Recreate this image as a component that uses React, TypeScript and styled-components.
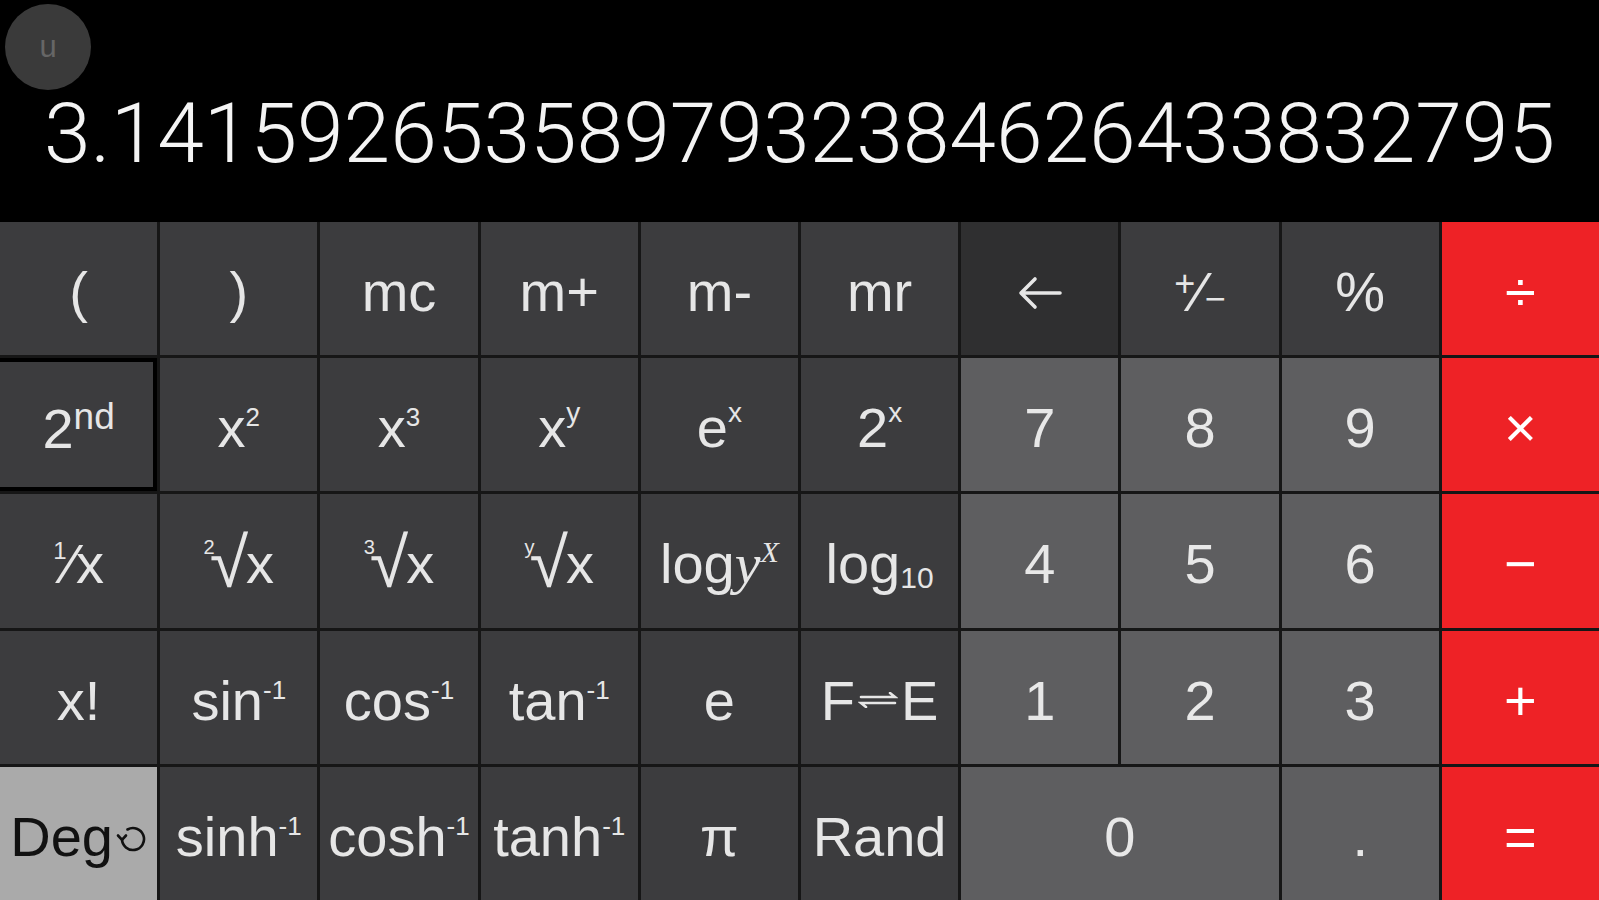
import React, { ReactNode } from 'react';
import styled, { createGlobalStyle, css } from 'styled-components';

type Tone = 'fn' | 'back' | 'num' | 'op' | 'mode';

const palette: Record<Tone, { bg: string; fg: string }> = {
    fn: { bg: '#3c3c3e', fg: '#e6e6e6' },
    back: { bg: '#2f2f30', fg: '#e6e6e6' },
    num: { bg: '#5e5e60', fg: '#e8e8e8' },
    op: { bg: '#ee2226', fg: '#ffffff' },
    mode: { bg: '#aaaaaa', fg: '#111111' },
};

const GlobalStyle = createGlobalStyle`
    html, body {
        margin: 0;
        padding: 0;
        background: #000;
    }
    body {
        font-family: 'Liberation Sans', Arial, sans-serif;
        overflow: hidden;
    }
`;

const Screen = styled.div`
    width: 1599px;
    height: 900px;
    display: flex;
    flex-direction: column;
    background: #000;
`;

const Display = styled.div`
    position: relative;
    height: 222px;
    box-sizing: border-box;
    padding-top: 92px;
    display: flex;
    justify-content: center;
`;

const Avatar = styled.div`
    position: absolute;
    top: 4px;
    left: 5px;
    width: 86px;
    height: 86px;
    border-radius: 50%;
    background: #3a3a3a;
    color: #666666;
    font-size: 31px;
    display: flex;
    align-items: center;
    justify-content: center;
`;

const Readout = styled.div`
    font-family: Roboto, 'Liberation Sans', sans-serif;
    font-weight: 300;
    font-size: 84px;
    line-height: 1;
    color: #f4f4f4;
    white-space: nowrap;
`;

const Keypad = styled.div`
    flex: 1;
    display: grid;
    grid-template-columns: repeat(10, 1fr);
    grid-template-rows: repeat(5, 1fr);
    gap: 3px;
    background: #161616;
`;

const Key = styled.button<{ $tone: Tone; $span?: number; $selected?: boolean }>`
    grid-column: span ${(p) => p.$span ?? 1};
    margin: 0;
    padding: 7px 0 0;
    border: 0;
    min-width: 0;
    background: ${(p) => palette[p.$tone].bg};
    color: ${(p) => palette[p.$tone].fg};
    font-family: 'Liberation Sans', Arial, sans-serif;
    font-size: 56px;
    display: flex;
    align-items: center;
    justify-content: center;
    white-space: nowrap;
    ${(p) =>
        p.$selected &&
        css`
            box-shadow: inset -4px 0 0 #000, inset 0 4px 0 #000, inset 0 -4px 0 #000;
        `}
`;

const Label = styled.span`
    display: inline-block;
    line-height: 1.15;
`;

const Sup = styled.span<{ $size?: number; $raise?: number }>`
    font-size: ${(p) => p.$size ?? 26}px;
    vertical-align: ${(p) => p.$raise ?? 21}px;
`;

const Sub = styled.span<{ $size?: number; $drop?: number }>`
    font-size: ${(p) => p.$size ?? 30}px;
    vertical-align: ${(p) => -(p.$drop ?? 5)}px;
`;

const RootIndex = styled.span`
    font-size: 20px;
    vertical-align: 29px;
    margin-right: -5px;
`;

const Radical = styled.span`
    font-size: 70px;
    line-height: 0;
    vertical-align: -4px;
    margin-right: -2px;
`;

const Serif = styled.span`
    font-family: 'Liberation Serif', 'Times New Roman', serif;
    font-style: italic;
    font-size: 58px;
`;

const InlineIcon = styled.svg<{ $lift?: number; $gap?: number }>`
    vertical-align: ${(p) => p.$lift ?? 0}px;
    margin: 0 ${(p) => p.$gap ?? 0}px;
`;

const BackArrow = () => (
    <svg width="46" height="36" viewBox="0 0 46 36" fill="none" stroke="#e6e6e6" strokeWidth="3.6" strokeLinecap="round" strokeLinejoin="round">
        <path d="M43 18H5M18 4L4 18l14 14" />
    </svg>
);

const SwapArrow = () => (
    <InlineIcon $lift={12} $gap={3} width="40" height="16" viewBox="0 0 40 16" fill="none" stroke="#e6e6e6" strokeWidth="2.6" strokeLinecap="round">
        <path d="M3 5h34l-5-4M37 11H3l5 4" />
    </InlineIcon>
);

const RotateIcon = () => (
    <InlineIcon $lift={2} $gap={1} width="32" height="30" viewBox="0 0 32 30" fill="none" stroke="#111" strokeWidth="2.6" strokeLinecap="round" strokeLinejoin="round">
        <path d="M8 15A11 11 0 1 0 13.5 5.5" />
        <path d="M4 11.5L8 15.8 12 11.5" />
    </InlineIcon>
);

const Root = ({ index }: { index: string }) => (
    <>
        <RootIndex>{index}</RootIndex>
        <Radical>√</Radical>x
    </>
);

type KeyDef = { label: ReactNode; tone: Tone; span?: number; selected?: boolean };

const keys: KeyDef[] = [
    { label: '(', tone: 'fn' },
    { label: ')', tone: 'fn' },
    { label: 'mc', tone: 'fn' },
    { label: 'm+', tone: 'fn' },
    { label: 'm-', tone: 'fn' },
    { label: 'mr', tone: 'fn' },
    { label: <BackArrow />, tone: 'back' },
    {
        label: (
            <>
                <Sup $size={36} $raise={15}>+</Sup>
                <span>⁄</span>
                <Sub $size={36} $drop={0}>−</Sub>
            </>
        ),
        tone: 'fn',
    },
    { label: '%', tone: 'fn' },
    { label: '÷', tone: 'op' },

    {
        label: (
            <>
                2<Sup $size={37} $raise={19}>nd</Sup>
            </>
        ),
        tone: 'fn',
        selected: true,
    },
    { label: <>x<Sup>2</Sup></>, tone: 'fn' },
    { label: <>x<Sup>3</Sup></>, tone: 'fn' },
    { label: <>x<Sup $size={28} $raise={25}>y</Sup></>, tone: 'fn' },
    { label: <>e<Sup $size={28} $raise={25}>x</Sup></>, tone: 'fn' },
    { label: <>2<Sup $size={28} $raise={25}>x</Sup></>, tone: 'fn' },
    { label: '7', tone: 'num' },
    { label: '8', tone: 'num' },
    { label: '9', tone: 'num' },
    { label: '×', tone: 'op' },

    { label: <><Sup $size={24} $raise={24}>1</Sup>⁄x</>, tone: 'fn' },
    { label: <Root index="2" />, tone: 'fn' },
    { label: <Root index="3" />, tone: 'fn' },
    { label: <Root index="y" />, tone: 'fn' },
    {
        label: (
            <>
                log
                <Serif>
                    y<Sup $size={30} $raise={21}>X</Sup>
                </Serif>
            </>
        ),
        tone: 'fn',
    },
    { label: <>log<Sub>10</Sub></>, tone: 'fn' },
    { label: '4', tone: 'num' },
    { label: '5', tone: 'num' },
    { label: '6', tone: 'num' },
    { label: '−', tone: 'op' },

    { label: 'x!', tone: 'fn' },
    { label: <>sin<Sup>-1</Sup></>, tone: 'fn' },
    { label: <>cos<Sup>-1</Sup></>, tone: 'fn' },
    { label: <>tan<Sup>-1</Sup></>, tone: 'fn' },
    { label: 'e', tone: 'fn' },
    { label: <>F<SwapArrow />E</>, tone: 'fn' },
    { label: '1', tone: 'num' },
    { label: '2', tone: 'num' },
    { label: '3', tone: 'num' },
    { label: '+', tone: 'op' },

    { label: <>Deg<RotateIcon /></>, tone: 'mode' },
    { label: <>sinh<Sup>-1</Sup></>, tone: 'fn' },
    { label: <>cosh<Sup>-1</Sup></>, tone: 'fn' },
    { label: <>tanh<Sup>-1</Sup></>, tone: 'fn' },
    { label: 'π', tone: 'fn' },
    { label: 'Rand', tone: 'fn' },
    { label: '0', tone: 'num', span: 2 },
    { label: '.', tone: 'num' },
    { label: '=', tone: 'op' },
];

export default function App() {
    return (
        <>
            <GlobalStyle />
            <Screen>
                <Display>
                    <Avatar>u</Avatar>
                    <Readout>3.1415926535897932384626433832795</Readout>
                </Display>
                <Keypad>
                    {keys.map((k, i) => (
                        <Key key={i} $tone={k.tone} $span={k.span} $selected={k.selected}>
                            <Label>{k.label}</Label>
                        </Key>
                    ))}
                </Keypad>
            </Screen>
        </>
    );
}
